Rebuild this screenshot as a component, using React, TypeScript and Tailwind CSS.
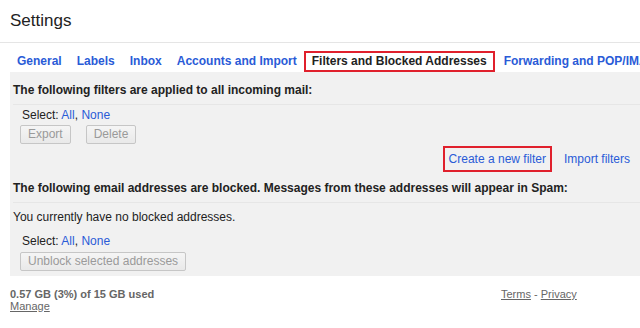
const tabs = ['General', 'Labels', 'Inbox', 'Accounts and Import'];

function SelectRow() {
  return (
    <div className="pl-[12px] text-[12px] leading-[14px] text-[#222]">
      Select: <span className="text-[#2a5bd7]">All</span>,{' '}
      <span className="text-[#2a5bd7]">None</span>
    </div>
  );
}

function GrayButton({ label }: { label: string }) {
  return (
    <button
      className="h-[19px] rounded-[2px] border border-[#c6c6c6] bg-gradient-to-b from-[#f5f5f5] to-[#e9e9e9] px-[7px] text-[12px] leading-[17px] text-[#9a9a9a]"
      type="button"
    >
      {label}
    </button>
  );
}

export default function App() {
  return (
    <div className="h-[328px] w-[640px] overflow-hidden bg-white font-['Liberation_Sans',Arial,sans-serif] text-[#222]">
      <div className="h-[43px] border-b border-[#e5e5e5] pl-[10px] pt-[11px] text-[17px] leading-[20px] text-[#222]">
        Settings
      </div>

      <div className="flex h-[29px] items-end whitespace-nowrap pl-[17px] text-[12px] font-bold leading-[14px]">
        {tabs.map((tab) => (
          <span className="mb-[4px] mr-[15px] text-[#2a5bd7]" key={tab}>
            {tab}
          </span>
        ))}
        <span className="-ml-[8px] mr-[9px] border-2 border-[#e0202c] bg-white px-[6px] pb-[2px] pt-[1px] text-[#222]">
          Filters and Blocked Addresses
        </span>
        <span className="mb-[4px] text-[#2a5bd7]">Forwarding and POP/IMAP</span>
      </div>

      <div className="ml-[10px] bg-[#f1f1f1] pb-[4px] pt-[11px]">
        <div className="pl-[3px] text-[12px] font-bold leading-[15px] text-[#222]">
          The following filters are applied to all incoming mail:
        </div>
        <div className="ml-[3px] mt-[6px] border-t border-[#e6e6e6]" />
        <div className="pt-[3px]">
          <SelectRow />
          <div className="mt-[3px] flex gap-[15px] pl-[10px]">
            <GrayButton label="Export" />
            <GrayButton label="Delete" />
          </div>
        </div>
        <div className="mt-[2px] flex justify-end pr-[10px] text-[12px] leading-[14px] text-[#2a5bd7]">
          <span className="border-2 border-[#e0202c] px-[4px] pb-[4px] pt-[4px]">
            Create a new filter
          </span>
          <span className="ml-[12px] pt-[6px]">Import filters</span>
        </div>
        <div className="mt-[9px] pl-[3px] text-[12px] font-bold leading-[15px] text-[#222]">
          The following email addresses are blocked. Messages from these addresses will appear in Spam:
        </div>
        <div className="ml-[3px] mt-[6px] border-t border-[#e6e6e6]" />
        <div className="pl-[3px] pt-[7px] text-[12px] leading-[14px] text-[#222]">
          You currently have no blocked addresses.
        </div>
        <div className="pt-[10px]">
          <SelectRow />
          <div className="pl-[10px]">
            <GrayButton label="Unblock selected addresses" />
          </div>
        </div>
      </div>

      <div className="flex pl-[10px] pt-[12px] text-[11px] leading-[12px] text-[#666]">
        <div className="w-[491px]">
          <div className="font-bold">0.57 GB (3%) of 15 GB used</div>
          <div className="underline">Manage</div>
        </div>
        <div>
          <span className="underline">Terms</span> - <span className="underline">Privacy</span>
        </div>
      </div>
    </div>
  );
}
